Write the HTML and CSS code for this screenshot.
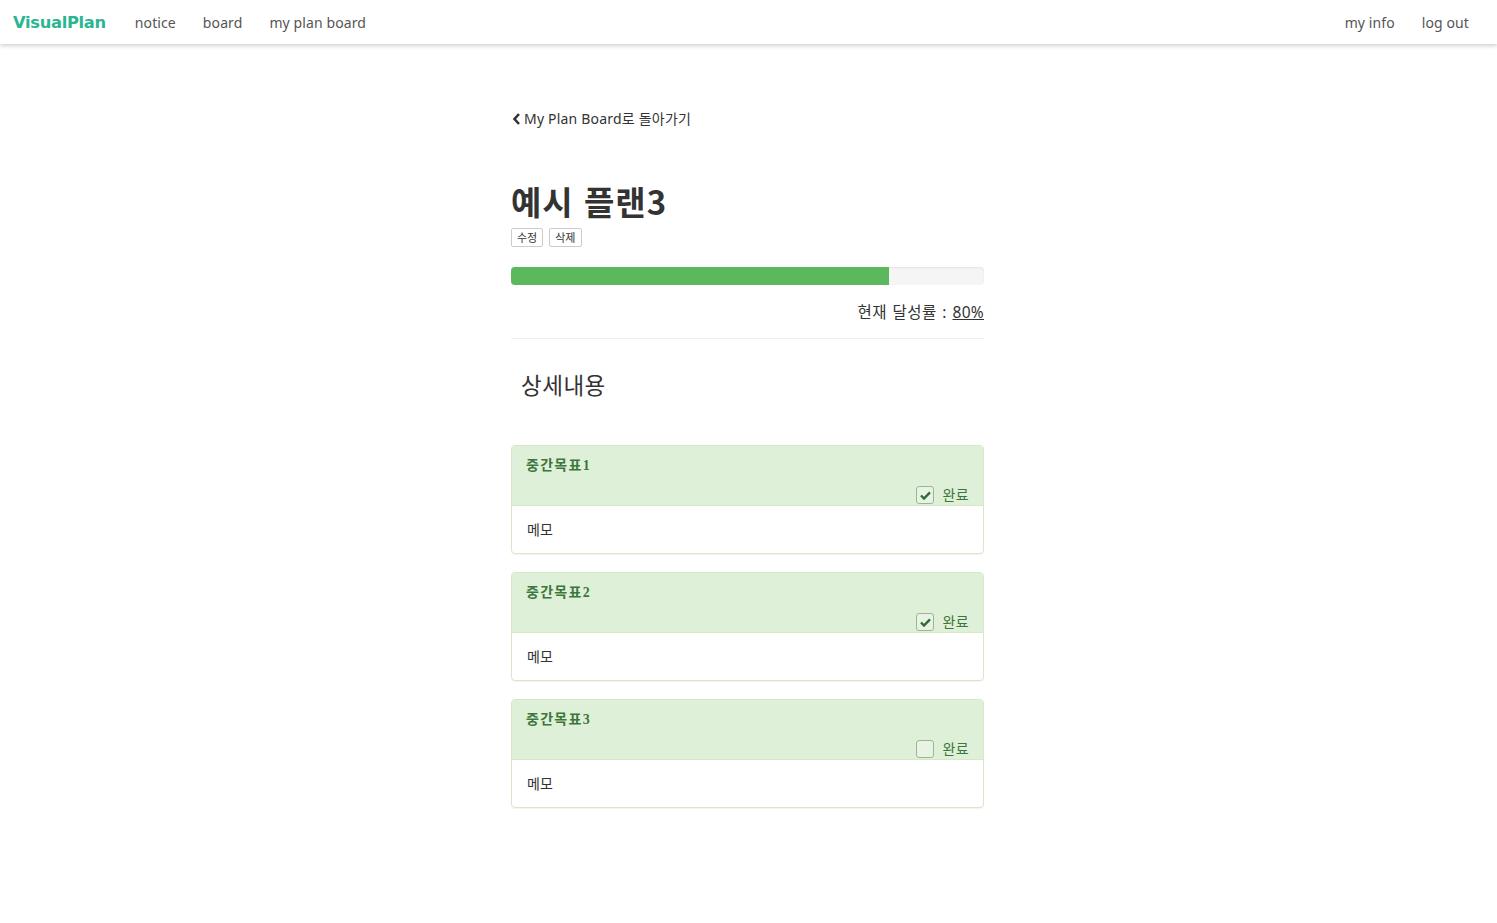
FILE: index.html
```html
<!DOCTYPE html>
<html lang="ko">
<head>
<meta charset="utf-8">
<title>VisualPlan</title>
<link rel="stylesheet" href="styles.css">
</head>
<body>
<nav class="navbar">
  <div class="nav-left">
    <a class="brand" href="#">VisualPlan</a>
    <a class="nav-link" href="#">notice</a>
    <a class="nav-link" href="#">board</a>
    <a class="nav-link" href="#">my plan board</a>
  </div>
  <div class="nav-right">
    <a class="nav-link" href="#">my info</a>
    <a class="nav-link" href="#">log out</a>
  </div>
</nav>

<main class="container">
  <a class="back" href="#"><svg class="chev" width="9" height="12" viewBox="0 0 9 12"><path d="M7 1 L2.5 6 L7 11" fill="none" stroke="#333" stroke-width="2.6"/></svg>My Plan Board로 돌아가기</a>

  <h1 class="title">예시 플랜3</h1>
  <div class="actions">
    <button class="btn-xs">수정</button>
    <button class="btn-xs">삭제</button>
  </div>

  <div class="progress"><div class="progress-bar" style="width:80%"></div></div>
  <p class="rate">현재 달성률 : <u>80%</u></p>
  <hr class="divider">

  <h3 class="section">상세내용</h3>

  <div class="panel">
    <div class="panel-heading">
      <div class="panel-title">중간목표1</div>
      <label class="done"><span class="cb checked"><svg width="11" height="9" viewBox="0 0 11 9"><path d="M1 4.5 L4 7.5 L10 1.3" fill="none" stroke="#2f6b32" stroke-width="2.4"/></svg></span>완료</label>
    </div>
    <div class="panel-body">메모</div>
  </div>

  <div class="panel">
    <div class="panel-heading">
      <div class="panel-title">중간목표2</div>
      <label class="done"><span class="cb checked"><svg width="11" height="9" viewBox="0 0 11 9"><path d="M1 4.5 L4 7.5 L10 1.3" fill="none" stroke="#2f6b32" stroke-width="2.4"/></svg></span>완료</label>
    </div>
    <div class="panel-body">메모</div>
  </div>

  <div class="panel">
    <div class="panel-heading">
      <div class="panel-title">중간목표3</div>
      <label class="done"><span class="cb"></span>완료</label>
    </div>
    <div class="panel-body">메모</div>
  </div>
</main>
</body>
</html>
```

FILE: styles.css
```css
* { box-sizing: border-box; }
html, body { margin: 0; padding: 0; }
body {
  font-family: "Noto Sans", "Noto Sans CJK KR", sans-serif;
  font-size: 14px;
  color: #333;
  background: #fff;
}
a { text-decoration: none; color: inherit; }

.navbar {
  height: 44px;
  display: flex;
  justify-content: space-between;
  align-items: center;
  background: #fff;
  box-shadow: 0 2px 4px rgba(0,0,0,0.18);
  padding: 0 28px 0 13px;
}
.nav-left, .nav-right { display: flex; align-items: center; }
.brand {
  font-weight: bold;
  font-size: 16.3px;
  color: #2bb591;
  margin-right: 29px;
  font-family: "DejaVu Sans", "Noto Sans", sans-serif;
  letter-spacing: -0.3px;
}
.nav-link {
  font-size: 14px;
  color: #555;
  margin-right: 27px;
  letter-spacing: 0.1px;
}
.nav-left .nav-link:last-child { margin-right: 0; }
.nav-right .nav-link:last-child { margin-right: 0; }

.container {
  width: 475px;
  margin: 0 auto;
  padding-top: 65px;
  padding-bottom: 100px;
}
.back {
  display: inline-flex;
  align-items: center;
  font-size: 14px;
  color: #333;
  line-height: 20px;
  margin-left: 1px;
  letter-spacing: 0.2px;
}
.chev { margin-right: 3px; }

.title {
  font-size: 33px;
  font-weight: bold;
  margin: 52px 0 0 0;
  line-height: 40px;
  color: #333;
  font-family: "Noto Sans CJK KR", sans-serif;
  letter-spacing: 1px;
}
.actions { display: flex; gap: 6px; margin-top: 7px; }
.btn-xs {
  font-family: "Noto Sans CJK KR", sans-serif;
  font-size: 11px;
  padding: 0 5px;
  height: 19px;
  line-height: 17px;
  border: 1px solid #ccc;
  border-radius: 2px;
  background: #fff;
  color: #333;
}

.progress {
  width: 473px;
  height: 18px;
  background: #f5f5f5;
  border-radius: 4px;
  overflow: hidden;
  margin-top: 20px;
  box-shadow: inset 0 1px 2px rgba(0,0,0,0.08);
}
.progress-bar { height: 100%; background: #5cb85c; }

.rate {
  width: 473px;
  text-align: right;
  margin: 15px 0 0;
  font-size: 15.5px;
  line-height: 24px;
  color: #333;
  letter-spacing: 0.5px;
  word-spacing: 1px;
}
.rate u { letter-spacing: 0.3px; }
.divider {
  width: 473px;
  border: 0;
  border-top: 1px solid #eee;
  margin: 14px 0 0;
}
.section {
  font-weight: normal;
  font-size: 22.5px;
  line-height: 30px;
  margin: 32px 0 0 10px;
  color: #333;
  letter-spacing: 0.5px;
}

.panel {
  width: 473px;
  border: 1px solid #d6e9c6;
  border-radius: 4px;
  margin-top: 44px;
  box-shadow: 0 1px 1px rgba(0,0,0,0.05);
}
.panel + .panel { margin-top: 18px; }
.panel-heading {
  background: #dff0d8;
  color: #3c763d;
  border-bottom: 1px solid #d6e9c6;
  border-radius: 3px 3px 0 0;
  padding: 10px 14px 3px 14px;
  height: 60px;
}
.panel-title {
  font-family: "Liberation Serif", "Noto Sans CJK KR", serif;
  font-weight: bold;
  font-size: 14px;
  line-height: 20px;
  letter-spacing: 1.3px;
}
.done {
  display: flex;
  justify-content: flex-end;
  align-items: center;
  font-size: 14px;
  line-height: 20px;
  margin-top: 9px;
  color: #3c763d;
  letter-spacing: 0.4px;
}
.cb {
  width: 18px;
  height: 18px;
  border: 1px solid #9cb595;
  border-radius: 3px;
  background: #e8f3e3;
  margin-right: 8px;
  display: inline-flex;
  align-items: center;
  justify-content: center;
}
.panel-body {
  padding: 14px 15px 14px;
  font-size: 14px;
  line-height: 19px;
  color: #333;
}
```
